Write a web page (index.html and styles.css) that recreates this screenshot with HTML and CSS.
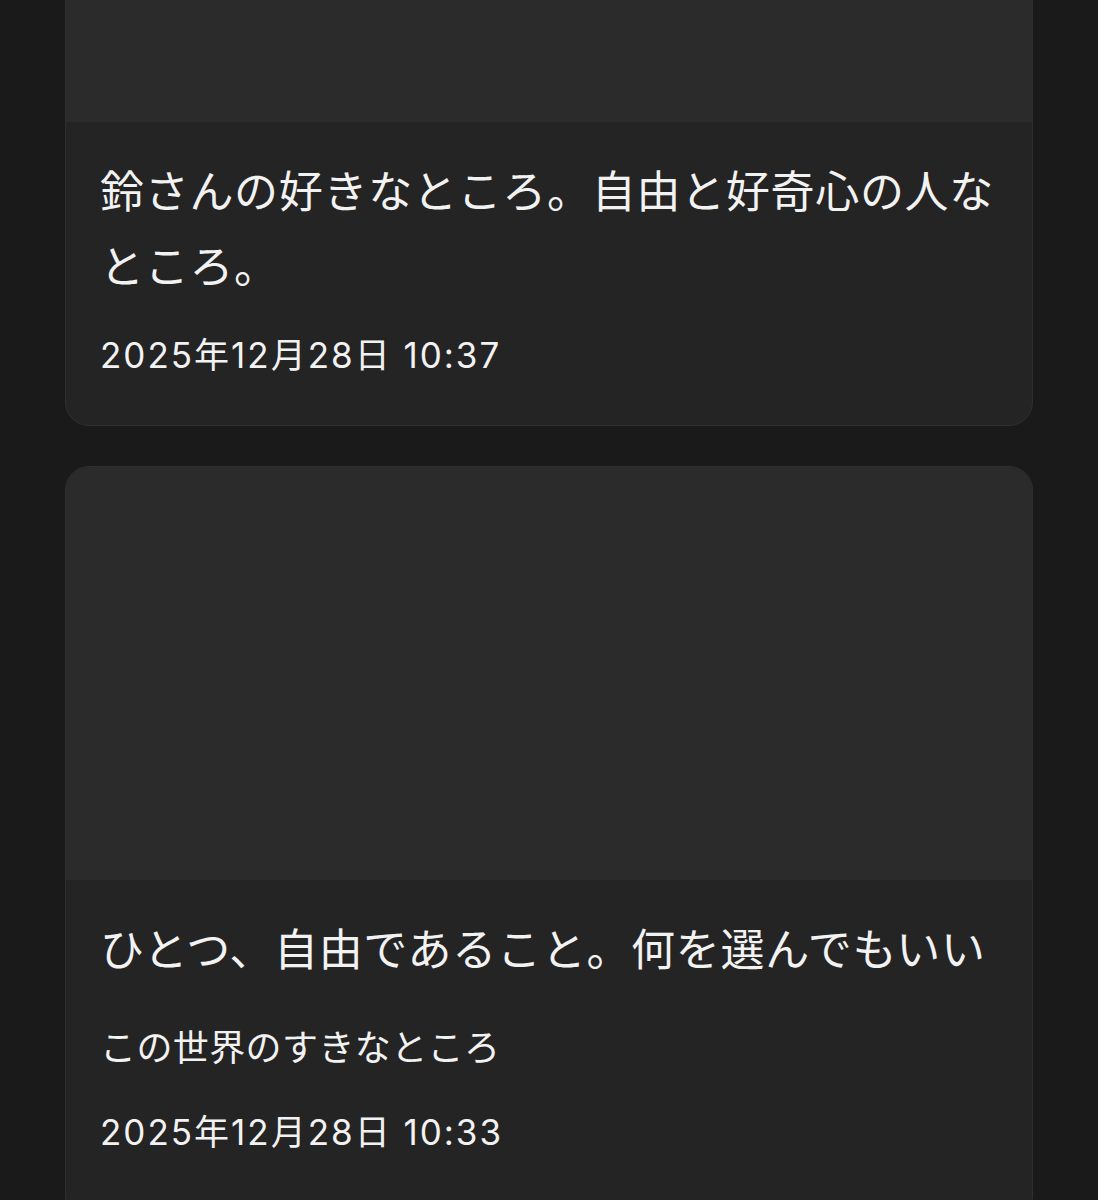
FILE: index.html
```html
<!DOCTYPE html>
<html lang="ja">
<head>
<meta charset="utf-8">
<title>メモ</title>
<link rel="stylesheet" href="styles.css">
</head>
<body>
<main class="list">
  <article class="card">
    <div class="card-media"></div>
    <div class="card-body">
      <h2 class="card-title">鈴さんの好きなところ。自由と好奇心の人なところ。</h2>
      <p class="card-date">2025年12月28日 10:37</p>
    </div>
  </article>
  <article class="card">
    <div class="card-media"></div>
    <div class="card-body">
      <h2 class="card-title">ひとつ、自由であること。何を選んでもいい</h2>
      <p class="card-sub">この世界のすきなところ</p>
      <p class="card-date">2025年12月28日 10:33</p>
    </div>
  </article>
</main>
</body>
</html>
```

FILE: styles.css
```css
html, body {
  margin: 0;
  padding: 0;
  background: #1a1a1a;
}
body {
  font-family: Inter, "Noto Sans CJK JP", sans-serif;
  color: #f2f2f2;
  overflow: hidden;
  height: 1200px;
}
.list {
  display: flex;
  flex-direction: column;
  gap: 40px;
  padding: 0 65px;
  margin-top: -292px;
}
.card {
  background: #242424;
  border: 1px solid #2f2f2f;
  border-radius: 24px;
  overflow: hidden;
}
.card-media {
  height: 413px;
  background: #2b2b2b;
}
.card-body {
  padding: 30px 34px 43px;
}
.card:last-child .card-body {
  padding-bottom: 60px;
}
.card-title {
  margin: 0;
  font-family: "Noto Sans CJK JP", sans-serif;
  font-weight: 400;
  font-size: 44px;
  letter-spacing: 0.7px;
  line-height: 75px;
}
.card-sub {
  margin: 33px 0 0;
  font-family: "Noto Sans CJK JP", sans-serif;
  font-size: 36px;
  line-height: 54px;
  letter-spacing: 0.4px;
}
.card-date {
  margin: 26px 0 0;
  font-size: 35px;
  line-height: 54px;
  letter-spacing: 2px;
}
.card-sub + .card-date {
  margin-top: 33px;
}
```
